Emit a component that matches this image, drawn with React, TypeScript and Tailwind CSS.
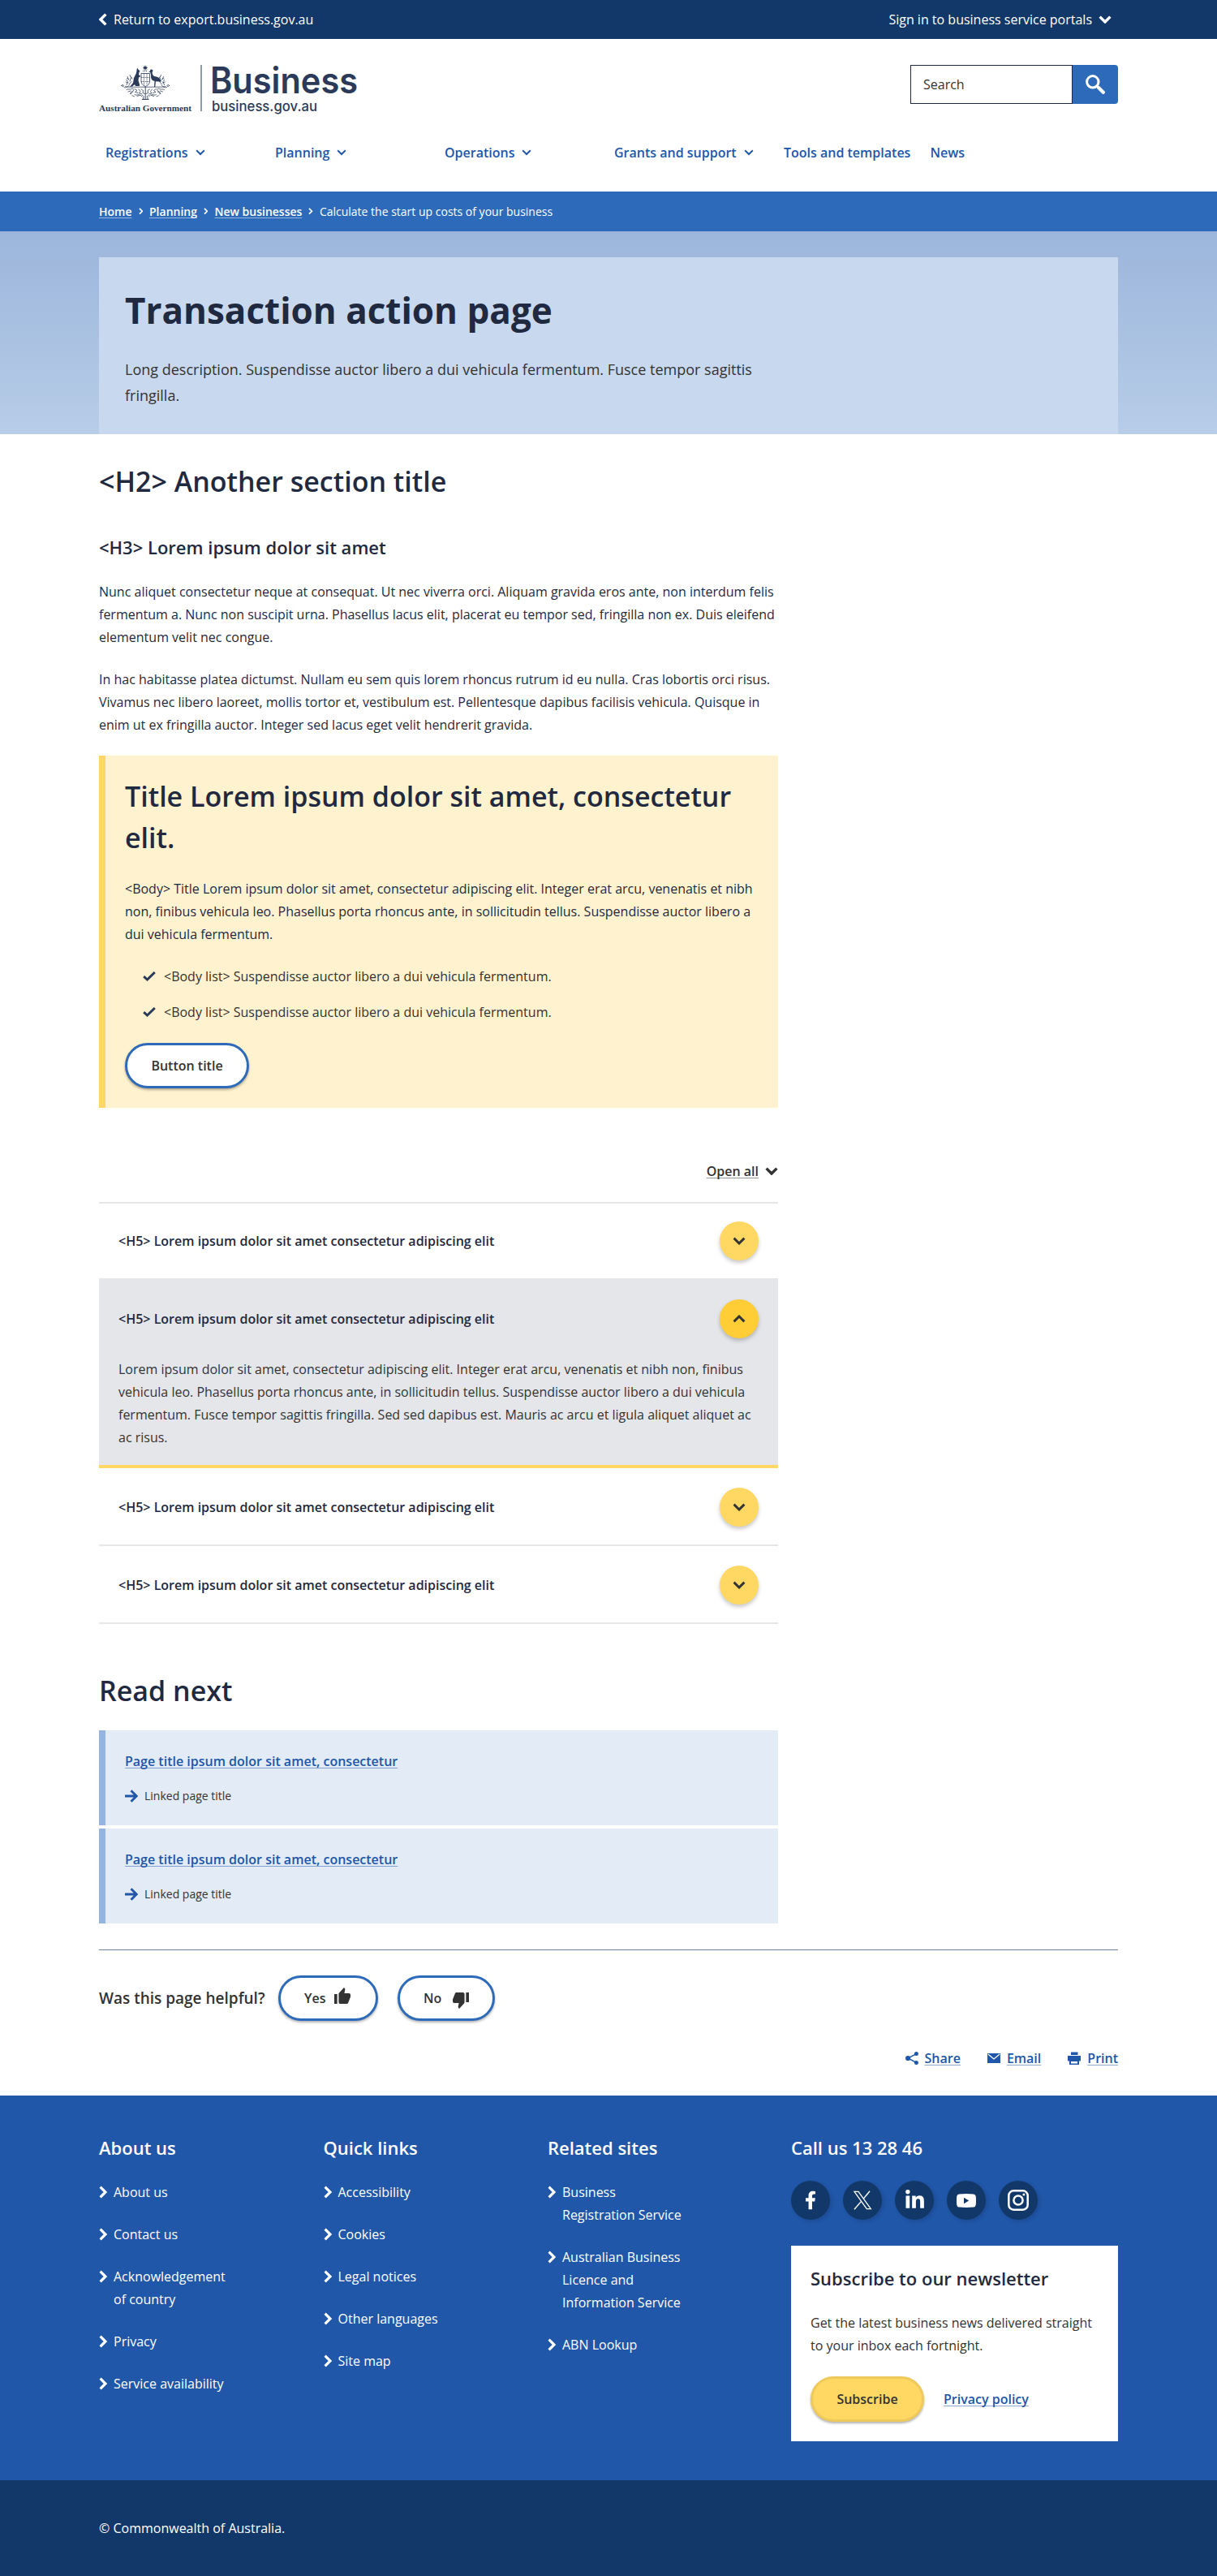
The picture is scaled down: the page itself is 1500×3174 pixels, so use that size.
import type { ReactNode } from "react";
import { FaFacebookF, FaLinkedinIn } from "react-icons/fa";

type Direction = "up" | "down" | "left" | "right";

const chevronPaths: Record<Direction, { box: string; d: string }> = {
  down: { box: "0 0 16 10", d: "M1.6 1.6 8 8l6.4-6.4" },
  up: { box: "0 0 16 10", d: "M1.6 8.4 8 2l6.4 6.4" },
  left: { box: "0 0 10 16", d: "M8.4 1.6 2 8l6.4 6.4" },
  right: { box: "0 0 10 16", d: "M1.6 1.6 8 8l-6.4 6.4" },
};

function Chevron({ dir, className, weight = 3.4 }: { dir: Direction; className: string; weight?: number }) {
  const c = chevronPaths[dir];
  return (
    <svg viewBox={c.box} className={`shrink-0 ${className}`} fill="none" stroke="currentColor" strokeWidth={weight}>
      <path d={c.d} />
    </svg>
  );
}

function Foliage() {
  return (
    <g fill="none" stroke="#2b3a58" strokeWidth="0.75" strokeLinecap="round">
      <path d="M57 27.2H40.5c-3 0-6 .2-8-.8M28 25.5c0-1.6 2.2-1.4 2.4 0s-2 1.8-2.4 0zM31 27.5c2 1.5 5-1 6.500-2.500" />
      <path d="M34 24.500l1.500-4-1.800-2.200M36 22l-2.800-1M36.500 18l-1.500-3.500M38 20l1.500-4.500-1.500-3M37 24l3-3.500M34.500 16.500l2 1M41 17l-1.200-2" />
      <path d="M34 30.500c2-1.500 4 .5 6-1s4 1.500 2 2.500-4 2-2.500 4M36 33l3-1M38.500 35.500l3.500-2.500M44 29.500l3 2-2.500 2 3.500 1M44 36.500c2 2 4-1 6 .5M49 30l2 2.500-1.500 2.500 3 .500M47 38.500l4-1.500 2 2M41 37.800l2.500 1M52 30l2.500 1.500-.5 3 2.500 1M53 37l2.500 2-1.500 2.500 2.500 1" />
    </g>
  );
}

function Logo() {
  return (
    <svg width="360" height="68" viewBox="0 0 360 68" className="block overflow-visible" fill="#2b3a58">
      <circle cx="57" cy="3.600" r="1.900" />
      <path d="M57 .4v6.400M53.900 3.600h6.200M54.800 1.400l4.400 4.400M59.200 1.400l-4.400 4.400" stroke="#2b3a58" strokeWidth="0.7" />
      <path d="M54 7.500h6" stroke="#2b3a58" strokeWidth="1" strokeDasharray="1 1" />
      <path d="M47 3.500l1.300 2 2.200 2L49.500 9 49 12l2.500 2-2.500 1.500-.5 3.500 1.500 5v2h-5l-1-2-3 2.500-3 .500 4-5 1-6 3-6z" />
      <path d="M65.500 5.700q-2.700-1-2.700 2.100l-1.600.8 2 .6q1.500 3 .8 6 1 4.500 4.500 4.500L68 27h1.300l.6-6.700 6.500.400q-1-5.700-6.700-6.500-2.800 0-3.800-3-1-3 .8-4.200z" />
      <path d="M52 10.500h10.500V20q0 4.500-5.200 6.500Q52 24.500 52 20z" fill="none" stroke="#2b3a58" strokeWidth="0.8" />
      <path d="M52 15.500h10.500M55.500 10.500V25M59 10.500V25M52 20.500h10.500" fill="none" stroke="#2b3a58" strokeWidth="0.7" strokeDasharray="1.600 0.8" />
      <Foliage />
      <g transform="translate(114.500 0) scale(-1 1)">
        <Foliage />
      </g>
      <path d="M57.200 27v15M53 42.500h8.500" stroke="#2b3a58" strokeWidth="0.9" fill="none" />
      <text x="0" y="57" fontFamily="Liberation Serif, serif" fontWeight="700" fontSize="11.400" textLength="114" lengthAdjust="spacingAndGlyphs">
        Australian Government
      </text>
      <rect x="125" y="0" width="2" height="57" fill="#8d98aa" />
      <text x="137" y="35.300" fontFamily="Inter, sans-serif" fontWeight="600" fontSize="44.500" textLength="182" lengthAdjust="spacingAndGlyphs">
        Business
      </text>
      <text x="139" y="57" fontFamily="Inter, sans-serif" fontWeight="500" fontSize="17" textLength="130" lengthAdjust="spacingAndGlyphs">
        business.gov.au
      </text>
    </svg>
  );
}

const nav = ["Registrations", "Planning", "Operations", "Grants and support"];

function Header() {
  return (
    <>
      <div className="h-12 bg-[#12386a] text-white">
        <div className="mx-auto flex h-full w-[1256px] items-center justify-between">
          <a className="flex items-center gap-2">
            <Chevron dir="left" className="h-4 w-[10px]" />
            Return to export.business.gov.au
          </a>
          <a className="flex items-center gap-2 pr-2">
            Sign in to business service portals
            <Chevron dir="down" className="h-[10px] w-4" />
          </a>
        </div>
      </div>
      <header className="mx-auto h-[188px] w-[1256px] pt-8">
        <div className="flex h-[68px] items-start justify-between">
          <Logo />
          <div className="flex h-12">
            <div className="flex w-[200px] items-center border border-[#1f2940] pl-[15px] text-[#333]">Search</div>
            <button className="flex w-14 items-center justify-center rounded-r bg-[#2d6bba] text-white">
              <svg viewBox="0 0 24 24" className="size-6" fill="none" stroke="currentColor">
                <circle cx="8.800" cy="8.800" r="7.200" strokeWidth="3" />
                <path d="M14 14l1.800 1.800" strokeWidth="2.500" />
                <path d="M16 16l5.800 5.800" strokeWidth="4.200" strokeLinecap="round" />
              </svg>
            </button>
          </div>
        </div>
        <nav className="flex h-20 items-center font-semibold text-[#2057a9]">
          {nav.map((n) => (
            <a key={n} className="flex w-[209px] shrink-0 items-center gap-[9px] pl-2">
              {n}
              <Chevron dir="down" className="h-[7.500px] w-3" weight={2.6} />
            </a>
          ))}
          <a className="pl-2">Tools and templates</a>
          <a className="pl-6">News</a>
        </nav>
      </header>
    </>
  );
}

function Breadcrumb() {
  return (
    <div className="h-[49px] bg-[#2d6bba] text-white">
      <div className="mx-auto flex h-full w-[1256px] items-center gap-2 text-sm">
        {["Home", "Planning", "New businesses"].map((b) => (
          <div key={b} className="flex items-center gap-2">
            <a className="font-semibold underline decoration-white/50 decoration-1 underline-offset-2 [text-decoration-skip-ink:none]">{b}</a>
            <Chevron dir="right" className="h-[8.500px] w-[5.500px]" weight={3.2} />
          </div>
        ))}
        <span>Calculate the start up costs of your business</span>
      </div>
    </div>
  );
}

function OutlineButton({ children, className }: { children: ReactNode; className: string }) {
  return (
    <button
      className={`flex h-14 items-center rounded-full border-[3px] border-[#2d6bba] bg-white text-[#333] shadow-[0_2px_3px_rgba(0,0,0,0.3)] ${className}`}
    >
      {children}
    </button>
  );
}

function Callout() {
  return (
    <section className="mt-6 h-[434px] border-l-8 border-[#ffd863] bg-[#fff2ce] p-6 text-[#1f2940]">
      <h2 className="pt-px text-[34px] leading-[51px] font-semibold">Title Lorem ipsum dolor sit amet, consectetur elit.</h2>
      <p className="mt-[23px] leading-7">
        &lt;Body&gt; Title Lorem ipsum dolor sit amet, consectetur adipiscing elit. Integer erat arcu, venenatis et nibh non, finibus
        vehicula leo. Phasellus porta rhoncus ante, in sollicitudin tellus. Suspendisse auctor libero a dui vehicula fermentum.
      </p>
      <ul className="mt-6 flex flex-col gap-4 pl-[22px] leading-7 text-[#333]">
        {[0, 1].map((i) => (
          <li key={i} className="flex items-center gap-[10px]">
            <svg viewBox="0 0 16 12" className="h-3 w-4" fill="none" stroke="#2b3a58" strokeWidth="3">
              <path d="M1.200 6.200 5.500 10 14.800 1" />
            </svg>
            &lt;Body list&gt; Suspendisse auctor libero a dui vehicula fermentum.
          </li>
        ))}
      </ul>
      <OutlineButton className="mt-6 w-[153px] justify-center font-semibold">Button title</OutlineButton>
    </section>
  );
}

function AccordionHead({ open = false }: { open?: boolean }) {
  return (
    <div className="flex h-12 items-center justify-between">
      <h5 className="font-semibold">&lt;H5&gt; Lorem ipsum dolor sit amet consectetur adipiscing elit</h5>
      <span
        className={`flex size-12 items-center justify-center rounded-full text-[#333] shadow-[0_3px_5px_rgba(0,0,0,0.22)] ${
          open ? "bg-[#ffcd36]" : "bg-[#ffd863]"
        }`}
      >
        <Chevron dir={open ? "up" : "down"} className="h-[10px] w-4" weight={2.9} />
      </span>
    </div>
  );
}

function Accordion() {
  return (
    <section className="mt-[64px] text-[#1f2940]">
      <div className="flex h-7 items-center justify-end gap-2 text-[#333]">
        <a className="font-semibold underline decoration-[#333]/50 decoration-1 underline-offset-2 [text-decoration-skip-ink:none]">Open all</a>
        <Chevron dir="down" className="h-[10px] w-4" />
      </div>
      <div className="mt-6 border-t-2 border-[#e5e6ea]">
        <div className="h-[92px] px-6 py-[22px]">
          <AccordionHead />
        </div>
        <div className="h-[234px] border-b-4 border-[#ffd863] bg-[#e5e6ea] px-6 pt-[26px]">
          <AccordionHead open />
          <p className="mt-6 leading-7 text-[#333]">
            Lorem ipsum dolor sit amet, consectetur adipiscing elit. Integer erat arcu, venenatis et nibh non, finibus vehicula leo.
            Phasellus porta rhoncus ante, in sollicitudin tellus. Suspendisse auctor libero a dui vehicula fermentum. Fusce tempor
            sagittis fringilla. Sed sed dapibus est. Mauris ac arcu et ligula aliquet aliquet ac ac risus.
          </p>
        </div>
        {[0, 1].map((i) => (
          <div key={i} className="h-24 border-b-2 border-[#e5e6ea] px-6 pt-6">
            <AccordionHead />
          </div>
        ))}
      </div>
    </section>
  );
}

function ReadNext() {
  return (
    <section className="mt-14">
      <h2 className="pt-px text-[34px] leading-[51px] font-semibold">Read next</h2>
      <div className="mt-[23px] flex flex-col gap-1">
        {[0, 1].map((i) => (
          <div key={i} className="h-[117px] border-l-8 border-[#96b4e0] bg-[#e3ebf6] p-6">
            <a className="block leading-7 font-semibold text-[#2057a9] underline decoration-[#2057a9]/50 decoration-1 underline-offset-2 [text-decoration-skip-ink:none]">
              Page title ipsum dolor sit amet, consectetur
            </a>
            <div className="mt-4 flex h-[25px] items-center gap-2 text-sm text-[#333]">
              <svg viewBox="0 0 16 16" className="size-4" fill="none" stroke="#2057a9" strokeWidth="2.900">
                <path d="M0 8h14M7.500 1.200 14.300 8 7.500 14.800" />
              </svg>
              Linked page title
            </div>
          </div>
        ))}
      </div>
    </section>
  );
}

function ActionLink({ icon, children }: { icon: ReactNode; children: ReactNode }) {
  return (
    <a className="flex items-center gap-2">
      {icon}
      <span className="underline decoration-[#2057a9]/50 decoration-1 underline-offset-2 [text-decoration-skip-ink:none]">{children}</span>
    </a>
  );
}

function Feedback() {
  return (
    <section className="mx-auto mt-8 w-[1256px] border-t border-[#71849e] pt-[31px]">
      <div className="flex items-center text-[#333]">
        <span className="w-[221px] text-[19px] font-semibold">Was this page helpful?</span>
        <OutlineButton className="w-[123px] justify-between pr-[31px] pl-[29px] font-semibold">
          Yes
          <svg viewBox="1 1 22 20" preserveAspectRatio="none" className="mb-[7px] size-5" fill="currentColor">
            <path d="M1 21h4V9H1v12zm22-11c0-1.100-.9-2-2-2h-6.310l.950-4.570.030-.320c0-.410-.170-.790-.440-1.060L14.170 1 7.590 7.590C7.220 7.950 7 8.450 7 9v10c0 1.100.900 2 2 2h9c.830 0 1.540-.5 1.840-1.220l3.020-7.050c.090-.230.140-.470.140-.730v-2z" />
          </svg>
        </OutlineButton>
        <OutlineButton className="ml-6 w-[120px] justify-between pr-[29px] pl-[29px] font-semibold">
          No
          <svg viewBox="1 3 22 20" preserveAspectRatio="none" className="mt-[6px] size-5" fill="currentColor">
            <path d="M15 3H6c-.830 0-1.540.5-1.840 1.220l-3.020 7.050c-.090.230-.140.470-.140.730v2c0 1.100.900 2 2 2h6.310l-.950 4.570-.030.320c0 .410.170.790.440 1.060L9.830 23l6.590-6.590c.360-.360.580-.860.580-1.410V5c0-1.100-.9-2-2-2zm4 0v12h4V3h-4z" />
          </svg>
        </OutlineButton>
      </div>
      <div className="mt-8 flex h-7 items-center justify-end gap-[33px] font-semibold text-[#2057a9]">
        <ActionLink
          icon={
            <svg viewBox="0 0 16 16" className="size-4" fill="currentColor">
              <circle cx="3.100" cy="8" r="3.100" />
              <circle cx="13.400" cy="2.600" r="2.500" />
              <circle cx="13.400" cy="13.400" r="2.500" />
              <path d="M13.400 2.600 3.100 8l10.300 5.400" fill="none" stroke="currentColor" strokeWidth="1.500" />
            </svg>
          }
        >
          Share
        </ActionLink>
        <ActionLink
          icon={
            <svg viewBox="0 0 16 16" className="size-4" fill="currentColor">
              <path d="M0 2h16v12H0z" />
              <path d="M.8 3 8 9l7.200-6" fill="none" stroke="#fff" strokeWidth="1.300" />
            </svg>
          }
        >
          Email
        </ActionLink>
        <ActionLink
          icon={
            <svg viewBox="0 0 16 16" className="size-4" fill="currentColor">
              <path d="M4 .5h8.500V4H4zM0 5h16v6.500h-2V9.500H2v2H0z" />
              <path d="M2 9h12v7H2zM4 12v2.500h8V12z" fillRule="evenodd" />
            </svg>
          }
        >
          Print
        </ActionLink>
      </div>
    </section>
  );
}

const columns = [
  {
    title: "About us",
    width: "w-[276.500px]",
    links: ["About us", "Contact us", "Acknowledgement of country", "Privacy", "Service availability"],
  },
  { title: "Quick links", width: "w-[276.500px]", links: ["Accessibility", "Cookies", "Legal notices", "Other languages", "Site map"] },
  {
    title: "Related sites",
    width: "w-[300px]",
    links: ["Business Registration Service", "Australian Business Licence and Information Service", "ABN Lookup"],
  },
];

const social: ReactNode[] = [
  <FaFacebookF key="f" className="h-6 w-[14px]" />,
  <svg key="x" viewBox="0 0 24 24" className="h-6 w-6" fill="none" stroke="currentColor">
    <path d="M2 1.300h5L22.300 22.700h-5z" strokeWidth="1.300" />
    <path d="M21 .8 13.400 10M10.300 13.600 2 23.200" strokeWidth="1.400" />
  </svg>,
  <FaLinkedinIn key="in" className="h-[26px] w-[25px]" />,
  <svg key="yt" viewBox="0 0 24 17" className="h-[17px] w-6" fill="currentColor">
    <path fillRule="evenodd" d="M3 .4Q12-.4 21 .4q2.600.3 2.800 3 .4 5.100 0 10.200-.2 2.700-2.800 3-9 .8-18 0-2.600-.3-2.800-3-.4-5.100 0-10.200Q.4.700 3 .4zM9 4.700v7.600l6.200-3.800z" />
  </svg>,
  <svg key="ig" viewBox="0 0 26 26" className="size-[26px]" fill="none" stroke="currentColor" strokeWidth="2.500">
    <rect x="1.300" y="1.300" width="23.400" height="23.400" rx="6" />
    <circle cx="13" cy="13" r="5.600" />
    <circle cx="19.900" cy="6.100" r="1.500" fill="currentColor" stroke="none" />
  </svg>,
];

function Footer() {
  return (
    <footer className="text-white">
      <div className="mt-8 h-[474px] bg-[#2057a9]">
        <div className="mx-auto flex w-[1256px] pt-12">
          {columns.map((c) => (
            <div key={c.title} className={`shrink-0 ${c.width}`}>
              <h3 className="text-[22px] leading-[33px] font-semibold">{c.title}</h3>
              <ul className="mt-6 flex flex-col gap-6">
                {c.links.map((l) => (
                  <li key={l} className="flex gap-2">
                    <Chevron dir="right" className="mt-[6px] h-4 w-[10px]" weight={3.2} />
                    <a className="w-[150px] leading-7">{l}</a>
                  </li>
                ))}
              </ul>
            </div>
          ))}
          <div className="w-[403px]">
            <h3 className="text-[22px] leading-[33px] font-semibold">Call us 13 28 46</h3>
            <div className="mt-6 flex gap-4">
              {social.map((s, i) => (
                <a key={i} className="flex size-12 items-center justify-center rounded-full bg-[#12386a] shadow-[2px_2px_5px_rgba(0,0,0,0.15)]">
                  {s}
                </a>
              ))}
            </div>
            <div className="mt-8 h-[241px] bg-white p-6 text-[#1f2940]">
              <h3 className="text-[22px] leading-[33px] font-semibold">Subscribe to our newsletter</h3>
              <p className="mt-6 w-[355px] leading-7 text-[#333]">Get the latest business news delivered straight to your inbox each fortnight.</p>
              <div className="mt-6 flex items-center gap-6 font-semibold">
                <button className="flex h-14 w-[140px] items-center justify-center rounded-full border-[3px] border-[#eec95c] bg-[#ffd863] text-[#333] shadow-[0_2px_3px_rgba(0,0,0,0.3)]">
                  Subscribe
                </button>
                <a className="text-[#2057a9] underline decoration-[#2057a9]/50 decoration-1 underline-offset-2 [text-decoration-skip-ink:none]">
                  Privacy policy
                </a>
              </div>
            </div>
          </div>
        </div>
      </div>
      <div className="h-[118px] bg-[#12386a]">
        <div className="mx-auto flex h-full w-[1256px] items-center">© Commonwealth of Australia.</div>
      </div>
    </footer>
  );
}

export default function App() {
  return (
    <div className="w-[1500px] bg-white font-['Open_Sans',sans-serif] text-base text-[#1f2940]">
      <Header />
      <Breadcrumb />
      <div className="h-[250px] bg-linear-to-b from-[#9cb5db] to-[#b7cde8] pt-8">
        <div className="mx-auto h-[218px] w-[1256px] bg-[#c8d8ee] p-8">
          <h1 className="text-[44px] leading-[66px] font-bold">Transaction action page</h1>
          <p className="mt-6 w-[783px] text-lg leading-8 text-[#333]">
            Long description. Suspendisse auctor libero a dui vehicula fermentum. Fusce tempor sagittis fringilla.
          </p>
        </div>
      </div>
      <main className="mx-auto w-[1256px]">
        <div className="w-[837px]">
          <h2 className="pt-[33px] text-[34px] leading-[51px] font-semibold">&lt;H2&gt; Another section title</h2>
          <h3 className="mt-[39px] text-[22px] leading-[33px] font-semibold">&lt;H3&gt; Lorem ipsum dolor sit amet</h3>
          <p className="mt-6 leading-7">
            Nunc aliquet consectetur neque at consequat. Ut nec viverra orci. Aliquam gravida eros ante, non interdum felis fermentum a.
            Nunc non suscipit urna. Phasellus lacus elit, placerat eu tempor sed, fringilla non ex. Duis eleifend elementum velit nec
            congue.
          </p>
          <p className="mt-6 leading-7">
            In hac habitasse platea dictumst. Nullam eu sem quis lorem rhoncus rutrum id eu nulla. Cras lobortis orci risus. Vivamus nec
            libero laoreet, mollis tortor et, vestibulum est. Pellentesque dapibus facilisis vehicula. Quisque in enim ut ex fringilla
            auctor. Integer sed lacus eget velit hendrerit gravida.
          </p>
          <Callout />
          <Accordion />
          <ReadNext />
        </div>
      </main>
      <Feedback />
      <Footer />
    </div>
  );
}
